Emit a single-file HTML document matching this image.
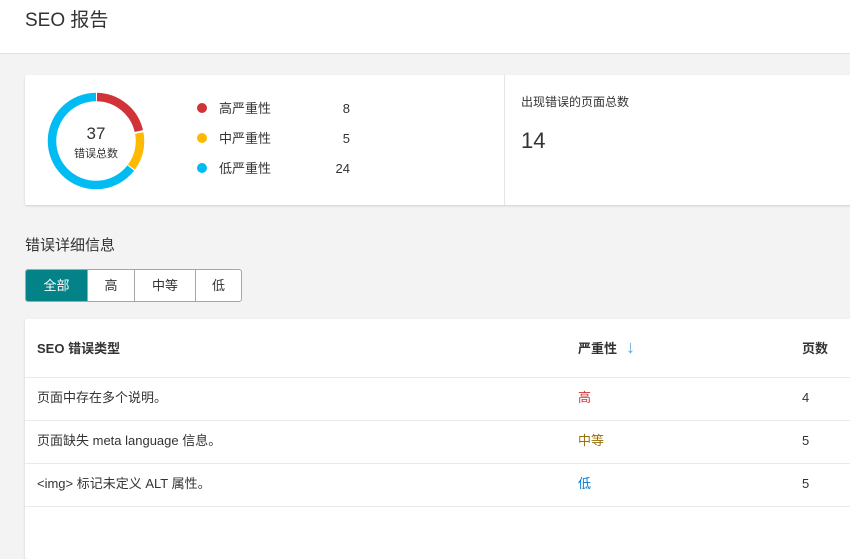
<!DOCTYPE html>
<html><head><meta charset="utf-8"><style>
*{margin:0;padding:0;box-sizing:border-box}
body{width:850px;height:548px;overflow:hidden;background:#f3f3f3;font-family:"Liberation Sans","Noto Sans CJK SC",sans-serif;color:#333;position:relative}
.a{position:absolute;white-space:nowrap}
.hdr{left:0;top:0;width:850px;height:54px;background:#fff;border-bottom:1px solid #e1e1e1}
.card{background:#fff;box-shadow:0 1px 2px rgba(0,0,0,.15);border-radius:2px}
.dot{width:10px;height:10px;border-radius:50%}
.f13{font-size:13px;line-height:18px}
.line{height:1px;background:#eaeaea;left:25px;width:825px}
</style></head><body>
<div class="a hdr"></div>
<div class="a" style="left:25px;top:9px;font-size:19px;line-height:24px;color:#333">SEO 报告</div>

<div class="a card" style="left:25px;top:75px;width:830px;height:130px"></div>
<div class="a" style="left:504px;top:75px;width:1px;height:130px;background:#e5e5e5"></div>
<svg class="a" style="left:46px;top:91px" width="100" height="100" viewBox="0 0 100 100">
<g transform="rotate(-90 50 50)" fill="none" stroke-width="8.5">
<circle cx="50" cy="50" r="44" stroke="#00bcf2" stroke-dasharray="178.5 300" stroke-dashoffset="-98"/>
<circle cx="50" cy="50" r="44" stroke="#d13438" stroke-dasharray="58 300" stroke-dashoffset="-1"/>
<circle cx="50" cy="50" r="44" stroke="#ffb900" stroke-dasharray="36 300" stroke-dashoffset="-61"/>
</g></svg>
<div class="a" style="left:46px;top:124px;width:100px;text-align:center;font-size:17px;line-height:20px;color:#333">37</div>
<div class="a" style="left:46px;top:147px;width:100px;text-align:center;font-size:11px;line-height:14px;color:#333">错误总数</div>

<div class="a dot" style="left:197px;top:103px;background:#d13438"></div>
<div class="a f13" style="left:219px;top:100px">高严重性</div>
<div class="a f13" style="left:300px;top:100px;width:50px;text-align:right">8</div>
<div class="a dot" style="left:197px;top:133px;background:#ffb900"></div>
<div class="a f13" style="left:219px;top:130px">中严重性</div>
<div class="a f13" style="left:300px;top:130px;width:50px;text-align:right">5</div>
<div class="a dot" style="left:197px;top:163px;background:#00bcf2"></div>
<div class="a f13" style="left:219px;top:160px">低严重性</div>
<div class="a f13" style="left:300px;top:160px;width:50px;text-align:right">24</div>

<div class="a" style="left:521px;top:94px;font-size:12px;line-height:16px">出现错误的页面总数</div>
<div class="a" style="left:521px;top:128px;font-size:22px;line-height:26px;color:#333">14</div>

<div class="a" style="left:25px;top:236px;font-size:15px;line-height:20px">错误详细信息</div>
<div class="a" style="left:25px;top:269px;width:217px;height:33px;border:1px solid #a6a6a6;border-radius:3px;background:#fff;overflow:hidden;display:flex;font-size:13px">
<div style="width:61px;background:#038387;color:#fff;text-align:center;line-height:31px">全部</div>
<div style="width:47px;border-left:1px solid #a6a6a6;text-align:center;line-height:31px">高</div>
<div style="width:61px;border-left:1px solid #a6a6a6;text-align:center;line-height:31px">中等</div>
<div style="flex:1;border-left:1px solid #a6a6a6;text-align:center;line-height:31px">低</div>
</div>

<div class="a card" style="left:25px;top:319px;width:830px;height:240px"></div>
<div class="a f13" style="left:37px;top:340px;font-weight:bold">SEO 错误类型</div>
<div class="a f13" style="left:578px;top:340px;font-weight:bold">严重性</div>
<div class="a" style="left:626px;top:336px;color:#5aa7e0;font-size:18px;line-height:22px">↓</div>
<div class="a f13" style="left:802px;top:340px;font-weight:bold">页数</div>
<div class="a line" style="top:377px"></div>
<div class="a f13" style="left:37px;top:389px">页面中存在多个说明。</div>
<div class="a f13" style="left:578px;top:389px;color:#d13438">高</div>
<div class="a f13" style="left:802px;top:389px">4</div>
<div class="a line" style="top:420px"></div>
<div class="a f13" style="left:37px;top:432px">页面缺失 meta language 信息。</div>
<div class="a f13" style="left:578px;top:432px;color:#986f0b">中等</div>
<div class="a f13" style="left:802px;top:432px">5</div>
<div class="a line" style="top:463px"></div>
<div class="a f13" style="left:37px;top:475px">&lt;img&gt; 标记未定义 ALT 属性。</div>
<div class="a f13" style="left:578px;top:475px;color:#0078d4">低</div>
<div class="a f13" style="left:802px;top:475px">5</div>
<div class="a line" style="top:506px"></div>
</body></html>
